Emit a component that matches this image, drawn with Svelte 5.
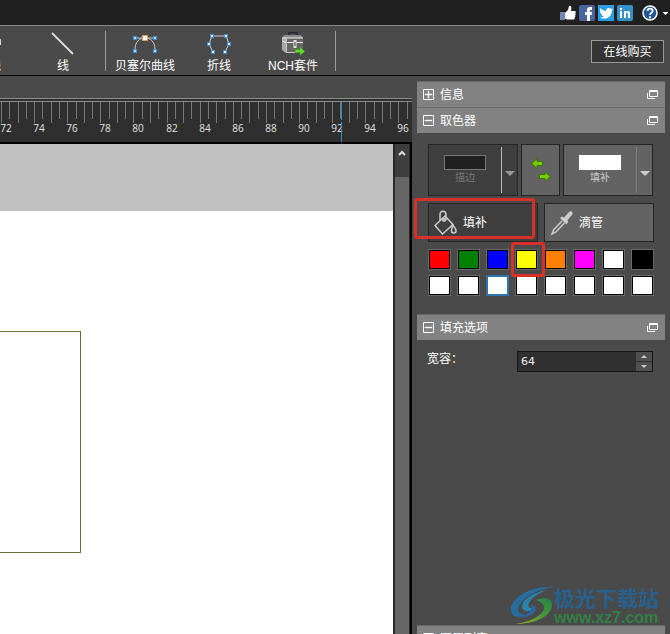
<script lang="ts">
	let tolerance = 64;
	let selected = 10;

	const colors = ['#ff0000', '#008000', '#0000ff', '#ffff00', '#ff8000', '#ff00ff', '#ffffff', '#000000'];
	const swatches = [...colors, ...Array(8).fill('#ffffff')];

	const step = 8.28;
	const ticks = Array.from({ length: 50 }, (_, i) => ({
		x: Math.round(1 + i * step),
		long: i % 2 === 0
	}));
	const labels = Array.from({ length: 13 }, (_, i) => ({
		x: Math.round(6 + i * step * 4),
		value: 72 + i * 2
	}));
</script>

{#snippet panelHeader(title: string, open: boolean)}
	<header class="panel-header">
		<button class="toggle" aria-expanded={open}>
			<svg width="11" height="11" viewBox="0 0 11 11" aria-hidden="true">
				<path d="M.5.5h10v10H.5z" fill="none" stroke="#fff" />
				<path d={open ? 'M2 5h7v1H2z' : 'M2 5h7v1H2zM5 2h1v7H5z'} fill="#fff" stroke="#fff" stroke-width=".4" />
			</svg>
			<span>{title}</span>
		</button>
		<button class="detach" aria-label="弹出">
			<svg width="11" height="10" viewBox="0 0 11 10" fill="none" stroke="#fff">
				<path d="M2.5.5h8v6h-8zM2.5 1.5h8M.5 3v5.5H8" />
			</svg>
		</button>
	</header>
{/snippet}

<div class="app">
	<div class="titlebar">
		<a class="social" href="#like" aria-label="Like">
			<svg width="16" height="16" viewBox="0 0 16 16">
				<path d="M0 7h5v8H0z" fill="#7186b5" />
				<path d="M5 8l3-3 1-4c2-1 3 1 2 5h4c1 0 1 2 0 2 1 1 1 2 0 2.300.6 1 .5 2-.5 2.200.5 1 0 2-1 2H7l-2-1z" fill="#fff" />
			</svg>
		</a>
		<a class="social" href="#facebook" aria-label="Facebook">
			<svg width="16" height="16" viewBox="0 0 16 16">
				<rect width="16" height="16" rx="2" fill="#4b649f" />
				<path d="M8 16V10H6V7h2V5c0-2 1-3 3-3h2v3h-1c-1 0-1 .3-1 1v1h2l-.4 3H11v6z" fill="#fff" />
			</svg>
		</a>
		<a class="social" href="#twitter" aria-label="Twitter">
			<svg width="16" height="16" viewBox="0 0 16 16">
				<rect width="16" height="16" fill="#2a9fe6" />
				<path d="M2 3c2 2 4 3 6 3 0-3 3-4 5-2l2-.5-1 1.500.5 0-.7 1C13.500 11 10 14 5 13.500c-1 0-2-.5-3-1 1.500 0 3-.3 4-1-1.500-.2-2.300-1-2.600-2h1C3 9 2 8 2 6.500l1 .3C1.800 5.800 1.500 4.500 2 3z" fill="#fff" />
			</svg>
		</a>
		<a class="social" href="#linkedin" aria-label="LinkedIn">
			<svg width="16" height="16" viewBox="0 0 16 16">
				<rect width="16" height="16" rx="2" fill="#3593c9" />
				<path d="M3 6h2v7H3zM3 3h2v2H3zM7 6h2v1c1-1.500 4-1.500 4 1.500V13h-2V9c0-1.700-2-1.700-2 0v4H7z" fill="#fff" />
			</svg>
		</a>
		<button class="help" aria-label="帮助">
			<svg width="26" height="16" viewBox="0 0 26 16">
				<circle cx="8" cy="8" r="7" fill="#1d559f" stroke="#fff" stroke-width="1.500" />
				<path d="M5.500 6c0-3.200 5.200-3.200 5.200 0C10.700 7.800 8 7.800 8 10" fill="none" stroke="#fff" stroke-width="1.800" />
				<path d="M7 11.200h2v2H7z" fill="#fff" />
				<path d="M20.500 7h6L23.500 10z" fill="#fff" />
			</svg>
		</button>
	</div>

	<nav class="toolbar">
		<button class="tool clipped">
			<svg width="24" height="24" viewBox="0 0 24 24">
				<path d="M2 20C6 4 16 4 23.500 8v5" fill="none" stroke="#ddd" stroke-width="1.500" />
			</svg>
			<span>曲线</span>
		</button>
		<button class="tool">
			<svg width="24" height="24" viewBox="0 0 24 24">
				<path d="M1 1l21 21" stroke="#ddd" stroke-width="1.800" />
			</svg>
			<span>线</span>
		</button>
		<i class="divider"></i>
		<button class="tool">
			<svg width="24" height="24" viewBox="0 0 24 24">
				<path d="M2 6h20M2 18C2 9 7 6 12 6s10 3 10 12" fill="none" stroke="#ccc" />
				<path d="M0 4h4v4H0zM20 4h4v4h-4zM0 17h4v4H0zM20 17h4v4h-4z" fill="#3f8fdb" />
				<path d="M1 5h2v2H1zM21 5h2v2h-2zM1 18h2v2H1zM21 18h2v2h-2z" fill="#b5d9fa" />
				<path d="M9.500 3.500h5v5h-5z" fill="#fff" stroke="#e0a050" />
			</svg>
			<span>贝塞尔曲线</span>
		</button>
		<button class="tool">
			<svg width="24" height="24" viewBox="0 0 24 24">
				<path d="M6 20L2 12 5 4h14l3 8-4 8" fill="none" stroke="#ccc" />
				<path d="M3 2h4v4H3zM17 2h4v4h-4zM0 10h4v4H0zM20 10h4v4h-4zM4 18h4v4H4zM16 18h4v4h-4z" fill="#3f8fdb" />
				<path d="M4 3h2v2H4zM18 3h2v2h-2zM1 11h2v2H1zM21 11h2v2h-2zM5 19h2v2H5zM17 19h2v2h-2z" fill="#e6f4ff" />
			</svg>
			<span>折线</span>
		</button>
		<button class="tool">
			<svg width="24" height="24" viewBox="0 0 24 24">
				<path d="M8 3V.8h8V3" fill="none" stroke="#252b38" stroke-width="1.500" />
				<path d="M3 3h17l2 3H1z" fill="#8a8a8a" />
				<path d="M1 6l4-1v16l-4-3z" fill="#a8a8a8" />
				<path d="M5 6h17v15H5z" fill="#666" />
				<path d="M1 6h21M5 10.500h17M1 9l4 1.500" fill="none" stroke="#eee" />
				<path d="M5.500 6v14.500H16" fill="none" stroke="#c8c8c8" />
				<path d="M12.500 8h3v8h-3z" fill="#ddd" />
				<path d="M13.500 10h1v4h-1z" fill="#444" />
				<path d="M14 17.500h5v-3l5 5-5 4v-3h-5z" fill="#65d92d" stroke="#298b13" stroke-width=".6" />
			</svg>
			<span>NCH套件</span>
		</button>
		<i class="divider"></i>
		<button class="buy">在线购买</button>
	</nav>

	<div class="workspace">
		<main class="editor">
			<div class="ruler">
				<svg width="100%" height="40">
					{#each ticks as tick}
						<rect x={tick.x} y="0" width="1" height={tick.long ? 21 : 17} fill="#777" />
					{/each}
					{#each labels as label}
						<text x={label.x} y="30" text-anchor="middle">{label.value}</text>
					{/each}
					<path d="M341.500 0v40" stroke="#2b8fbd" stroke-dasharray="18 2 5 2" />
				</svg>
			</div>
			<div class="view">
				<div class="canvas">
					<div class="page">
						<div class="shape"></div>
					</div>
				</div>
				<div class="scrollbar">
					<button class="scroll-up" aria-label="向上滚动">
						<svg width="8" height="6" viewBox="0 0 8 6">
							<path d="M1 5l3-3 3 3" fill="none" stroke="#ddd" stroke-width="2" />
						</svg>
					</button>
					<div class="thumb"></div>
				</div>
			</div>
		</main>

		<aside class="sidebar">
			<section>
				{@render panelHeader('信息', false)}
			</section>

			<section>
				{@render panelHeader('取色器', true)}
				<div class="picker">
					<div class="targets">
						<button class="target dark">
							<span class="preview"><i class="chip"></i>描边</span>
							<span class="arrow"><i></i></span>
						</button>
						<button class="swap" aria-label="交换颜色">
							<svg width="20" height="24" viewBox="0 0 20 24" fill="#79c900" stroke="#397500">
								<path d="M.7 5.500L6 .7v2.800h5.500v4H6v3zM19.300 18.500L14 13.700v2.800H8.500v4H14v3z" />
							</svg>
						</button>
						<button class="target">
							<span class="preview"><i class="chip white"></i>填补</span>
							<span class="arrow"><i></i></span>
						</button>
					</div>

					<div class="modes">
						<div class="marked">
							<button class="mode dark">
								<svg width="24" height="26" viewBox="0 0 24 26" fill="none" stroke="#ccc" stroke-width="1.500">
									<path d="M11 6L19 14.500 8.500 24 1 15.500zM6 10.500V5c0-5 6-5 6 0v5.500" />
									<circle cx="10" cy="10" r="1.200" />
									<path d="M18.500 15c2 2 3.500 4.500 3.500 6 0 2.500-4.500 2.500-4.500 0 0-1.500 1-3 1-6z" />
								</svg>
								填补
							</button>
							<i class="mark mark-mode"></i>
						</div>
						<button class="mode">
							<svg width="24" height="26" viewBox="0 0 24 26">
								<path d="M12 11L3.500 20 2 24l4-2 8.500-9" fill="none" stroke="#ccc" stroke-width="1.500" />
								<path d="M10 8l2-1.500 2 1L19 2c2-2 5 1 3 3l-4.500 5 .7 2.300-2 2z" fill="#ccc" />
							</svg>
							滴管
						</button>
					</div>

					<div class="swatches">
						{#each swatches as color, i}
							<div class="marked">
								<button
									class="swatch"
									class:selected={i === selected}
									style="background-color: {color}"
									aria-label="颜色 {i + 1}"
									on:click={() => (selected = i)}
								></button>
								{#if i === 3}
									<i class="mark mark-swatch"></i>
								{/if}
							</div>
						{/each}
					</div>
				</div>
			</section>

			<section class="grow">
				{@render panelHeader('填充选项', true)}
				<div class="option">
					<label for="tolerance">宽容：</label>
					<div class="spinner">
						<input id="tolerance" type="text" bind:value={tolerance} />
						<div class="steps">
							<button aria-label="增加" on:click={() => (tolerance = +tolerance + 1)}><i class="up"></i></button>
							<button aria-label="减少" on:click={() => (tolerance = +tolerance - 1)}><i class="down"></i></button>
						</div>
					</div>
				</div>
			</section>

			<section class="layers">
				{@render panelHeader('图层列表', true)}
			</section>
		</aside>
	</div>

	<div class="watermark">
		<svg width="44" height="40" viewBox="0 0 44 40">
			<defs>
				<linearGradient id="wave" x1="0" y1="1" x2="1" y2="0">
					<stop offset="0" stop-color="#98a82c" />
					<stop offset=".5" stop-color="#4d9a35" />
					<stop offset="1" stop-color="#21834a" />
				</linearGradient>
			</defs>
			<path d="M44 1C22-1 1 12 1 23c0 8 8 10 15 6-6 0-10-4-7-9C13 12 24 4 44 1z" fill="#276da0" />
			<path d="M36 4C22 7 12 14 12 21c0 5 9 6 12 1-4 1-7-1-5-5 3-6 9-9 17-13z" fill="#2b83ad" />
			<path d="M26 14c10-4 17-1 16 6-1 9-15 18-36 18 13-2 26-8 28-15 1-4-2-7-8-9z" fill="url(#wave)" />
			<path d="M22 19c6 1 5 7-1 10-4 2-8 3-12 2 9-2 13-6 13-12z" fill="#2b669c" />
		</svg>
		<div>
			<div class="site-name">极光下载站</div>
			<div class="site-url">www.xz7.com</div>
		</div>
	</div>
</div>

<style>
	:global(body) {
		background: #4a4a4a;
	}

	.app {
		position: relative;
		display: flex;
		flex-direction: column;
		height: 100vh;
		overflow: hidden;
		background: #4a4a4a;
		color: #fff;
		font: 12px/16px 'Liberation Sans', 'Noto Sans CJK SC', sans-serif;
	}

	.app * {
		box-sizing: border-box;
	}

	button {
		padding: 0;
		border: 0;
		background: none;
		color: inherit;
		font: inherit;
	}

	svg {
		display: block;
		flex: none;
	}

	.titlebar {
		display: flex;
		flex: none;
		justify-content: flex-end;
		align-items: center;
		gap: 3px;
		height: 26px;
		padding-right: 2px;
		border-bottom: 1px solid #8a8888;
		background: #202020;
	}

	.help {
		margin-left: 6px;
	}

	.toolbar {
		display: flex;
		flex: none;
		align-items: center;
		height: 50px;
		border-bottom: 1px solid #000;
		white-space: nowrap;
	}

	.tool {
		display: flex;
		flex: none;
		flex-direction: column;
		align-items: center;
		gap: 2px;
		width: 74px;
		padding-top: 4px;
	}

	.clipped {
		margin-left: -48px;
	}

	.divider {
		flex: none;
		width: 1px;
		height: 40px;
		margin: 0 2px 0 5px;
		background: #999;
	}

	.buy {
		width: 73px;
		height: 23px;
		margin: 2px 6px 0 auto;
		border: 1px solid #999;
		background: #353535;
	}

	.workspace {
		display: flex;
		flex: 1;
		min-height: 0;
	}

	.editor {
		display: flex;
		flex: 1;
		flex-direction: column;
		min-width: 0;
		padding-top: 22px;
	}

	.ruler {
		flex: none;
		overflow: hidden;
		border-top: 4px double #8a8a8a;
		background: #2f2f2f;
	}

	.ruler text {
		fill: #e4e4e4;
		font: 10px 'Open Sans', sans-serif;
	}

	.view {
		display: flex;
		flex: 1;
		border: 2px solid #000;
		border-width: 2px 2px 0 0;
	}

	.canvas {
		flex: 1;
		padding-top: 67px;
		background: #c0c0c0;
	}

	.page {
		height: 100%;
		padding-top: 120px;
		background: #fff;
	}

	.shape {
		width: 81px;
		height: 222px;
		border: 1px solid #6b6b3c;
		border-left: 0;
	}

	.scrollbar {
		display: flex;
		flex-direction: column;
		width: 17px;
		border: 1px solid #2a2a2a;
		border-width: 0 1px 0 2px;
	}

	.scroll-up {
		display: flex;
		justify-content: center;
		height: 33px;
		padding-top: 6px;
		background: #3e3e3e;
	}

	.thumb {
		flex: 1;
		background: #666;
	}

	.sidebar {
		display: flex;
		flex: none;
		flex-direction: column;
		width: 258px;
		padding: 5px 5px 0;
	}

	.panel-header {
		display: flex;
		justify-content: space-between;
		align-items: center;
		height: 26px;
		padding: 0 7px 0 6px;
		border-top: 1px solid #696969;
		background: #828282;
	}

	.toggle {
		display: flex;
		align-items: center;
		gap: 6px;
	}

	.picker {
		padding: 11px 11px 18px;
	}

	.targets {
		display: grid;
		grid-template-columns: 1fr 39px 1fr;
		gap: 3px;
		height: 52px;
		padding-right: 1px;
	}

	.target,
	.swap,
	.mode {
		border: 1px solid #252525;
		background: #636363;
	}

	.target.dark,
	.mode.dark {
		background: #3f3f3f;
	}

	.target {
		display: flex;
		align-items: center;
		color: #ccc;
		font-size: 10px;
	}

	.target.dark {
		color: #777;
	}

	.preview {
		display: flex;
		flex: 1;
		flex-direction: column;
		align-items: center;
	}

	.chip {
		width: 42px;
		height: 15px;
		border: 1px solid #777;
		background: #202020;
	}

	.chip.white {
		border-color: #fff;
		background: #fff;
	}

	.arrow {
		display: flex;
		justify-content: center;
		align-items: center;
		width: 16px;
		height: 46px;
		border-left: 1px solid #808080;
	}

	.dark .arrow {
		border-color: #bbb;
	}

	.arrow i {
		margin-top: 6px;
		border: 5px solid transparent;
		border-top-color: #ccc;
		border-bottom: 0;
	}

	.dark .arrow i {
		border-top-color: #999;
	}

	.swap {
		display: flex;
		justify-content: center;
		align-items: center;
	}

	.modes {
		display: grid;
		grid-template-columns: 1fr 1fr;
		gap: 6px;
		height: 39px;
		margin: 7px 0;
	}

	.mode {
		display: flex;
		align-items: center;
		gap: 5px;
		width: 100%;
		height: 39px;
		padding-left: 5px;
	}

	.swatches {
		display: grid;
		grid-template-columns: repeat(8, 23px);
		justify-content: space-between;
		gap: 5px 0;
	}

	.marked {
		position: relative;
	}

	.swatch {
		display: block;
		width: 23px;
		height: 21px;
		border: 1px solid #686868;
		box-shadow: inset 0 0 0 1px #000;
	}

	.swatch.selected {
		border-color: #2d75ac;
		box-shadow: inset 0 0 0 1px #2d75ac;
	}

	.mark {
		position: absolute;
		z-index: 1;
		border: 3px solid #d83129;
		border-radius: 3px;
		pointer-events: none;
	}

	.mark-mode {
		inset: -5px 3px 3px -14px;
	}

	.mark-swatch {
		inset: -7px -7px -7px -4px;
	}

	.grow {
		flex: 1;
	}

	.option {
		display: grid;
		grid-template-columns: 90px minmax(0, 1fr);
		padding: 11px 12px 0 10px;
	}

	.spinner {
		display: flex;
		height: 21px;
		border: 1px solid #151515;
		background: #303030;
	}

	input {
		flex: 1;
		min-width: 0;
		padding: 0 3px;
		border: 0;
		background: none;
		color: #eee;
		font: 11px 'DejaVu Sans', sans-serif;
	}

	.steps {
		display: flex;
		flex: none;
		flex-direction: column;
		gap: 1px;
		width: 16px;
	}

	.steps button {
		display: flex;
		flex: 1;
		justify-content: center;
		align-items: center;
		background: #505050;
	}

	.steps i {
		border: 0 solid transparent;
		border-width: 0 3px;
	}

	.steps .up {
		border-bottom: 3px solid #ccc;
	}

	.steps .down {
		border-top: 3px solid #ccc;
	}

	.layers {
		height: 9px;
		overflow: hidden;
	}

	.watermark {
		position: absolute;
		right: 11px;
		bottom: 7px;
		display: flex;
		align-items: center;
		pointer-events: none;
	}

	.site-name {
		color: #28618f;
		font: bold 21px/24px 'Noto Sans CJK SC', sans-serif;
	}

	.site-url {
		color: #347f46;
		font: bold 16px/18px 'Liberation Sans', sans-serif;
	}
</style>
